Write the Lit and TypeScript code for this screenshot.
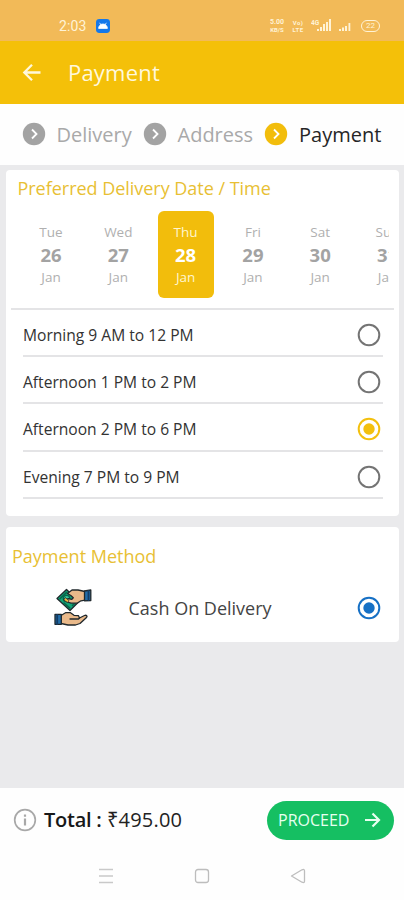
import { LitElement, html, css, svg } from "lit";
import { customElement, property, state } from "lit/decorators.js";
import { classMap } from "lit/directives/class-map.js";

const steps = ["Delivery", "Address", "Payment"];
const days = [
  ["Tue", "26"],
  ["Wed", "27"],
  ["Thu", "28"],
  ["Fri", "29"],
  ["Sat", "30"],
  ["Sun", "31"],
];
const slots = [
  "Morning 9 AM to 12 PM",
  "Afternoon 1 PM to 2 PM",
  "Afternoon 2 PM to 6 PM",
  "Evening 7 PM to 9 PM",
];

@customElement("radio-dot")
class RadioDot extends LitElement {
  @property() tone = "off";
  static styles = css`
    :host { display: block; width: 24px; height: 24px; flex: none; }
    svg { display: block; }
    .off { color: #747474; }
    .gold { color: #f3c00e; }
    .blue { color: #1670c5; }
  `;
  render() {
    return html`<svg class=${this.tone} width="24" height="24" viewBox="0 0 24 24">
      <circle cx="12" cy="12" r="10.3" fill="none" stroke="currentColor" stroke-width="2" />
      ${this.tone === "off" ? "" : svg`<circle cx="12" cy="12" r="5.7" fill="currentColor" />`}
    </svg>`;
  }
}

@customElement("status-bar")
class StatusBar extends LitElement {
  static styles = css`
    :host {
      display: flex; align-items: center; height: 41px; box-sizing: border-box;
      padding: 10px 24px 0 59px; background: #f2ba58; color: #fff3d6;
      font-family: Roboto, "Open Sans", sans-serif;
    }
    .time { font-size: 14px; letter-spacing: 0.1px; width: 37px; }
    .app { flex: 1; }
    svg { display: block; }
    .tiny { font-size: 6px; font-weight: 700; text-align: center; }
    .tiny div { height: 7px; line-height: 7px; }
    .rate { width: 18px; margin-right: 5px; }
    .rate div:first-child { font-size: 7px; }
    .lte { width: 14px; margin-right: 6px; letter-spacing: 0.4px; }
    .net { margin-right: 7px; }
    .signal { margin-right: 10px; }
    .battery {
      width: 19px; height: 12px; box-sizing: border-box; border: 1.5px solid #fff3d6;
      border-radius: 6px; font-size: 8px; line-height: 9px; text-align: center;
    }
  `;
  render() {
    return html`
      <div class="time">2:03</div>
      <div class="app">
        <svg width="14" height="14" viewBox="0 0 14 14">
          <rect width="14" height="14" rx="3.4" fill="#1478ea" />
          <path d="M2.6 9.4a4.4 4.4 0 0 1 8.8 0zM3.6 3.8l1.5 2.2M10.4 3.8L8.9 6" fill="#fff" stroke="#fff" stroke-width=".8" />
        </svg>
      </div>
      <div class="tiny rate"><div>5.00</div><div>KB/S</div></div>
      <div class="tiny lte"><div>Vo)</div><div>LTE</div></div>
      <svg class="net" width="21" height="13" viewBox="0 0 21 13" fill="#fff3d6">
        <text x="0" y="6" font-size="6.5" font-weight="700">4G</text>
        <path d="M6 10h2v2H6zM9 8h2v4H9zM12 5h2v7h-2zM15 3h2v9h-2zM18 0h2v12h-2z" />
      </svg>
      <svg class="signal" width="12" height="13" viewBox="0 0 12 13" fill="#fff3d6">
        <path d="M0 10h2v2H0zM3 8.500h2V12H3zM6 7h2v5H6zM9.500 4h1.800v8H9.500z" />
      </svg>
      <div class="battery">22</div>
    `;
  }
}

@customElement("cash-hands")
class CashHands extends LitElement {
  static styles = css`:host, svg { display: block; }`;
  render() {
    return html`<svg width="38" height="39" viewBox="0 0 38 39" stroke="#20282c" stroke-width="1.3" stroke-linejoin="round" stroke-linecap="round">
      <path d="M3 10.500L12.500 1.500L25 13.500L16 22.500z" fill="#12a477" />
      <path d="M6 10.800l6.500-6.300M10 15l5.800 5M18.500 17.500l3-3" stroke="#06664a" stroke-width="1.600" fill="none" />
      <circle cx="12.500" cy="10.500" r="3.200" fill="#35c79a" stroke="#06664a" />
      <path d="M13.500 5.500L18 2h6l7 1.500v8.700l-4 .6-4 2.400h-6l-3.500-1.200-1-2.500 1.800-.8 3.500.7 1.500-1.600-2.500-2.300z" fill="#e9b98a" />
      <path d="M11.500 9.800l3.500 2.700-1.500 2-3.500-2.300z" fill="#f2b63d" stroke-width=".8" />
      <path d="M30.500 3l6.300-1v10.500l-6.300.3z" fill="#226ca8" />
      <path d="M34.500 3v9" stroke="#123c66" stroke-width="1.800" />
      <path d="M7 27.500l4.500-2.800h5l3.500 2.600 4.500.4 1 2.300 5-2.500c2-.8 3.200.7 2 2l-6.500 6-4.500 1.500H14l-7-1.500z" fill="#e9b98a" />
      <path d="M16 31h8.500l1-1" fill="none" />
      <path d="M1 26.300h6.300v10H1z" fill="#226ca8" />
      <path d="M3.200 27v9" stroke="#123c66" stroke-width="1.800" />
    </svg>`;
  }
}

@customElement("app-root")
class AppRoot extends LitElement {
  @state() day = 2;
  @state() slotIndex = 2;

  static styles = css`
    :host {
      display: flex; flex-direction: column; width: 404px; height: 900px; overflow: hidden;
      background: #eaeaec; color: #333; font-family: "Open Sans", "Noto Sans", sans-serif;
      white-space: nowrap;
    }
    svg { display: block; flex: none; }
    .header {
      display: flex; align-items: center; height: 63px; padding-left: 22px; gap: 26px; box-sizing: border-box;
      background: #f4c009; color: #fff8dc; font-size: 22px; letter-spacing: 0.2px;
    }
    .header span { padding-bottom: 2px; }
    .steps {
      display: flex; align-items: center; height: 61px; box-sizing: border-box;
      padding: 0 0 1px 22px; background: #fefefe; font-size: 20px; color: #a9a9a9;
    }
    .step { display: flex; align-items: center; gap: 10.5px; width: 121px; }
    .step span { padding-top: 1px; }
    .step .disc { color: #a3a3a3; }
    .step.current { color: #262626; gap: 11px; }
    .step.current .disc { color: #f2bd0c; }
    .card { margin: 0 5px 0 6px; background: #fff; border-radius: 4px; }
    .schedule { margin-top: 5px; height: 346px; }
    .title { color: #e8bf34; font-size: 18px; line-height: 24px; }
    .schedule .title { padding: 6px 0 0 11.5px; letter-spacing: -0.03px; }
    .dates {
      display: flex; gap: 11.3px; margin: 11px 10px 0 5px; padding-left: 12px; height: 87px; overflow: hidden;
    }
    .date {
      flex: none; width: 56px; height: 87px; box-sizing: border-box; padding-top: 11px;
      border-radius: 6px; text-align: center; font-size: 13.5px; line-height: 21px; color: #b0b0b0;
    }
    .date b { display: block; font-size: 18.5px; line-height: 24px; color: #a3a3a3; }
    .date.chosen { background: #f2bd0c; color: #fff6d0; }
    .date.chosen b { color: #fff; }
    .slots { margin: 10px 5px 0; border-top: 2px solid #e4e4e6; padding: 0 11px 0 12px; }
    .slot {
      display: flex; align-items: center; justify-content: space-between; height: 47.2px;
      box-sizing: border-box; border-bottom: 2px solid #e4e4e6; padding: 5px 2px 0 0; font-size: 15.6px;
    }
    .method { margin-top: 11px; height: 115px; }
    .method .title { padding: 17px 0 0 6px; }
    .cash { display: flex; align-items: center; padding: 20px 18px 0 48px; font-size: 18px; color: #444; }
    .cash span { flex: 1; padding-left: 36.5px; }
    .footer { margin-top: auto; height: 112px; background: #fefefe; }
    .total { display: flex; align-items: center; height: 64px; padding: 0 10.5px 0 13px; font-size: 20px; color: #222; }
    .sum { flex: 1; padding: 0 0 2px 7px; letter-spacing: 0.2px; }
    .sum b { font-weight: 600; color: #181818; letter-spacing: -0.25px; }
    .proceed {
      display: flex; align-items: center; justify-content: space-between; width: 127px; height: 39px;
      box-sizing: border-box; padding: 0 13px 0 11.5px; border: 0; border-radius: 20px;
      background: #15bf62; color: #e7fff0; font: 16px "Open Sans", sans-serif;
    }
    .nav { display: flex; align-items: center; height: 48px; padding-left: 98px; gap: 80px; }
  `;

  render() {
    return html`
      <status-bar></status-bar>
      <div class="header">
        <svg width="20" height="20" viewBox="0 0 20 20" fill="none" stroke="currentColor" stroke-width="2.300"><path d="M18.500 9.500H3M10 1.800L2.300 9.500l7.700 7.700" /></svg>
        <span>Payment</span>
      </div>
      <div class="steps">
        ${steps.map(
          (s, i) => html`<div class=${classMap({ step: true, current: i === 2 })}>
            <svg class="disc" width="24" height="24" viewBox="0 0 24 24">
              <circle cx="12" cy="12" r="11.200" fill="currentColor" />
              <path d="M10 7.500l4.500 4.500-4.500 4.500" fill="none" stroke="#fff" stroke-width="1.800" />
            </svg>
            <span>${s}</span>
          </div>`
        )}
      </div>
      <div class="card schedule">
        <div class="title">Preferred Delivery Date / Time</div>
        <div class="dates">
          ${days.map(
            ([d, n], i) => html`<div class=${classMap({ date: true, chosen: i === this.day })} @click=${() => (this.day = i)}>
              ${d}<b>${n}</b>Jan
            </div>`
          )}
        </div>
        <div class="slots">
          ${slots.map(
            (s, i) => html`<div class="slot" @click=${() => (this.slotIndex = i)}>
              <span>${s}</span><radio-dot tone=${i === this.slotIndex ? "gold" : "off"}></radio-dot>
            </div>`
          )}
        </div>
      </div>
      <div class="card method">
        <div class="title">Payment Method</div>
        <div class="cash">
          <cash-hands></cash-hands><span>Cash On Delivery</span><radio-dot tone="blue"></radio-dot>
        </div>
      </div>
      <div class="footer">
        <div class="total">
          <svg width="24" height="24" viewBox="0 0 24 24" fill="none" stroke="#a8a8a8">
            <circle cx="12" cy="12" r="10.300" stroke-width="1.700" />
            <path d="M12 6.500v2.200M12 10.500v7" stroke-width="2.200" />
          </svg>
          <div class="sum"><b>Total :</b> ₹495.00</div>
          <button class="proceed">
            PROCEED
            <svg width="18" height="18" viewBox="0 0 18 18" fill="none" stroke="currentColor" stroke-width="2.200"><path d="M2 9h13.500M9.500 2.500L16 9l-6.500 6.500" /></svg>
          </button>
        </div>
        <div class="nav">
          <svg width="16" height="16" viewBox="0 0 16 16" stroke="#c9c9c9" stroke-width="1.500"><path d="M1 1.500h14M1 8h14M1 14.500h14" /></svg>
          <svg width="16" height="16" viewBox="0 0 16 16" fill="none" stroke="#bdbdbd" stroke-width="1.300"><rect x="1.500" y="1.500" width="13" height="13" rx="2.500" /></svg>
          <svg width="16" height="16" viewBox="0 0 16 16" fill="none" stroke="#bdbdbd" stroke-width="1.300"><path d="M1.500 8L12 1.800q2.500-1 2.500 1v10.400q0 2-2.500 1z" stroke-linejoin="round" /></svg>
        </div>
      </div>
    `;
  }
}
